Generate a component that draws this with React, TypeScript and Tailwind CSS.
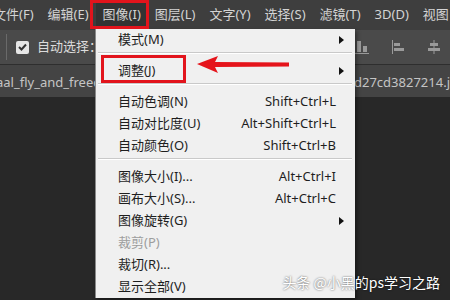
import React from 'react'

const MENU_BAR = ['文件(F)', '编辑(E)', '图像(I)', '图层(L)', '文字(Y)', '选择(S)', '滤镜(T)', '3D(D)', '视图']

type Item =
  | { sep: true }
  | { label: string; shortcut?: string; sub?: boolean; disabled?: boolean; sep?: false }

const ITEMS: Item[] = [
  { label: '模式(M)', sub: true },
  { sep: true },
  { label: '调整(J)', sub: true },
  { sep: true },
  { label: '自动色调(N)', shortcut: 'Shift+Ctrl+L' },
  { label: '自动对比度(U)', shortcut: 'Alt+Shift+Ctrl+L' },
  { label: '自动颜色(O)', shortcut: 'Shift+Ctrl+B' },
  { sep: true },
  { label: '图像大小(I)...', shortcut: 'Alt+Ctrl+I' },
  { label: '画布大小(S)...', shortcut: 'Alt+Ctrl+C' },
  { label: '图像旋转(G)', sub: true },
  { label: '裁剪(P)', disabled: true },
  { label: '裁切(R)...' },
  { label: '显示全部(V)' },
]

export default function App() {
  return (
    <div className="relative flex h-[300px] w-[450px] flex-col overflow-hidden bg-[#282828] font-['Noto_Sans','Noto_Sans_CJK_SC',sans-serif]">
      {/* menu bar */}
      <div className="flex h-[30px] shrink-0 items-center overflow-hidden whitespace-nowrap bg-[#3e3e3e] text-[13px] text-[#d4d4d4]">
        <div className="ml-[-14px] flex shrink-0">
          {MENU_BAR.map((m, i) => (
            <span
              key={i}
              className={
                i === 2
                  ? 'flex h-[30px] shrink-0 items-center bg-[#333333] px-[7px]'
                  : 'flex h-[30px] shrink-0 items-center px-[7px]'
              }>
              {m}
            </span>
          ))}
        </div>
      </div>

      {/* options bar */}
      <div className="flex h-[35px] shrink-0 items-center border-b border-[#2e2e2e] bg-[#4a4a4a] text-[#dcdcdc]">
        <div className="ml-[6px] h-[26px] w-px bg-[#6a6a6a]" />
        <div className="ml-[9px] flex h-[13px] w-[13px] items-center justify-center rounded-[2px] bg-[#e6e6e6]">
          <svg width="9" height="8" viewBox="0 0 9 8">
            <path d="M1 4 L3.5 6.5 L8 1.5" fill="none" stroke="#333" strokeWidth="2" />
          </svg>
        </div>
        <span className="ml-[8px] whitespace-nowrap text-[13px]">自动选择：</span>
        <div className="ml-auto mr-[8px] flex items-center gap-[20px]">
          <svg width="16" height="16" viewBox="0 0 16 16">
            <rect x="3" y="2" width="4" height="11" fill="#9a9a9a" />
            <rect x="9" y="7" width="4" height="6" fill="#9a9a9a" />
            <rect x="1" y="14" width="14" height="1" fill="#9a9a9a" />
          </svg>
          <svg width="16" height="16" viewBox="0 0 16 16">
            <rect x="2" y="1" width="1" height="14" fill="#9a9a9a" />
            <rect x="4" y="4" width="6" height="3" fill="#9a9a9a" />
            <rect x="4" y="9" width="10" height="3" fill="#9a9a9a" />
          </svg>
          <svg width="16" height="16" viewBox="0 0 16 16">
            <rect x="7.5" y="1" width="1" height="14" fill="#9a9a9a" />
            <rect x="4" y="4" width="8" height="3" fill="#9a9a9a" />
            <rect x="2" y="9" width="12" height="3" fill="#9a9a9a" />
          </svg>
        </div>
      </div>

      {/* document tab bar */}
      <div className="flex h-[32px] shrink-0 items-center justify-between whitespace-nowrap bg-[#444444] text-[13px] text-[#c4c4c4]">
        <span className="ml-[-4px] pt-[4px]">aal_fly_and_freedom</span>
        <span className="pt-[4px]">d27cd3827214.j</span>
      </div>

      <div className="flex-1 bg-[#282828]" />

      {/* dropdown menu */}
      <div className="absolute left-[95px] top-[29px] w-[260px] border-l border-[#8a8a8a] bg-[#f0f0f0] text-[13px] text-[#1e1e1e] shadow-[2px_2px_4px_rgba(0,0,0,0.4)]">
        {ITEMS.map((it, i) =>
          it.sep ? (
            <div key={i} className="h-[9px] pl-[2px] pr-[3px] pt-[1px]">
              <div className="h-px bg-[#c9c9c9]" />
              <div className="h-px bg-white" />
            </div>
          ) : (
            <div key={i} className="flex h-[22px] items-center whitespace-nowrap pl-[22px] pr-[19px]">
              <span className={it.disabled ? 'text-[#9d9d9d]' : ''}>{it.label}</span>
              <span className="ml-auto">{it.shortcut}</span>
              {it.sub && (
                <svg className="-mr-[8px] ml-auto" width="5" height="8" viewBox="0 0 5 8">
                  <path d="M0 0 L5 4 L0 8 Z" fill="#111" />
                </svg>
              )}
            </div>
          )
        )}
      </div>

      {/* annotations */}
      <div className="absolute left-[90px] top-0 h-[29px] w-[59px] border-[3px] border-[#e2141c]" />
      <div className="absolute left-[101px] top-[55px] h-[28px] w-[85px] border-[3px] border-[#e2141c]" />
      <svg className="absolute left-[194px] top-[54px]" width="100" height="22" viewBox="0 0 100 22">
        <path d="M3 10 L24 2 L21 8 L95 8.5 L95 12.5 L21 13 L24 19 Z" fill="#e5141b" />
      </svg>

      <div className="absolute bottom-[7px] right-[10px] whitespace-nowrap font-['Noto_Sans_CJK_SC',sans-serif] text-[14px] text-white [text-shadow:0_0_2px_rgba(0,0,0,0.7)]">
        头条 @小黑的ps学习之路
      </div>
    </div>
  )
}
